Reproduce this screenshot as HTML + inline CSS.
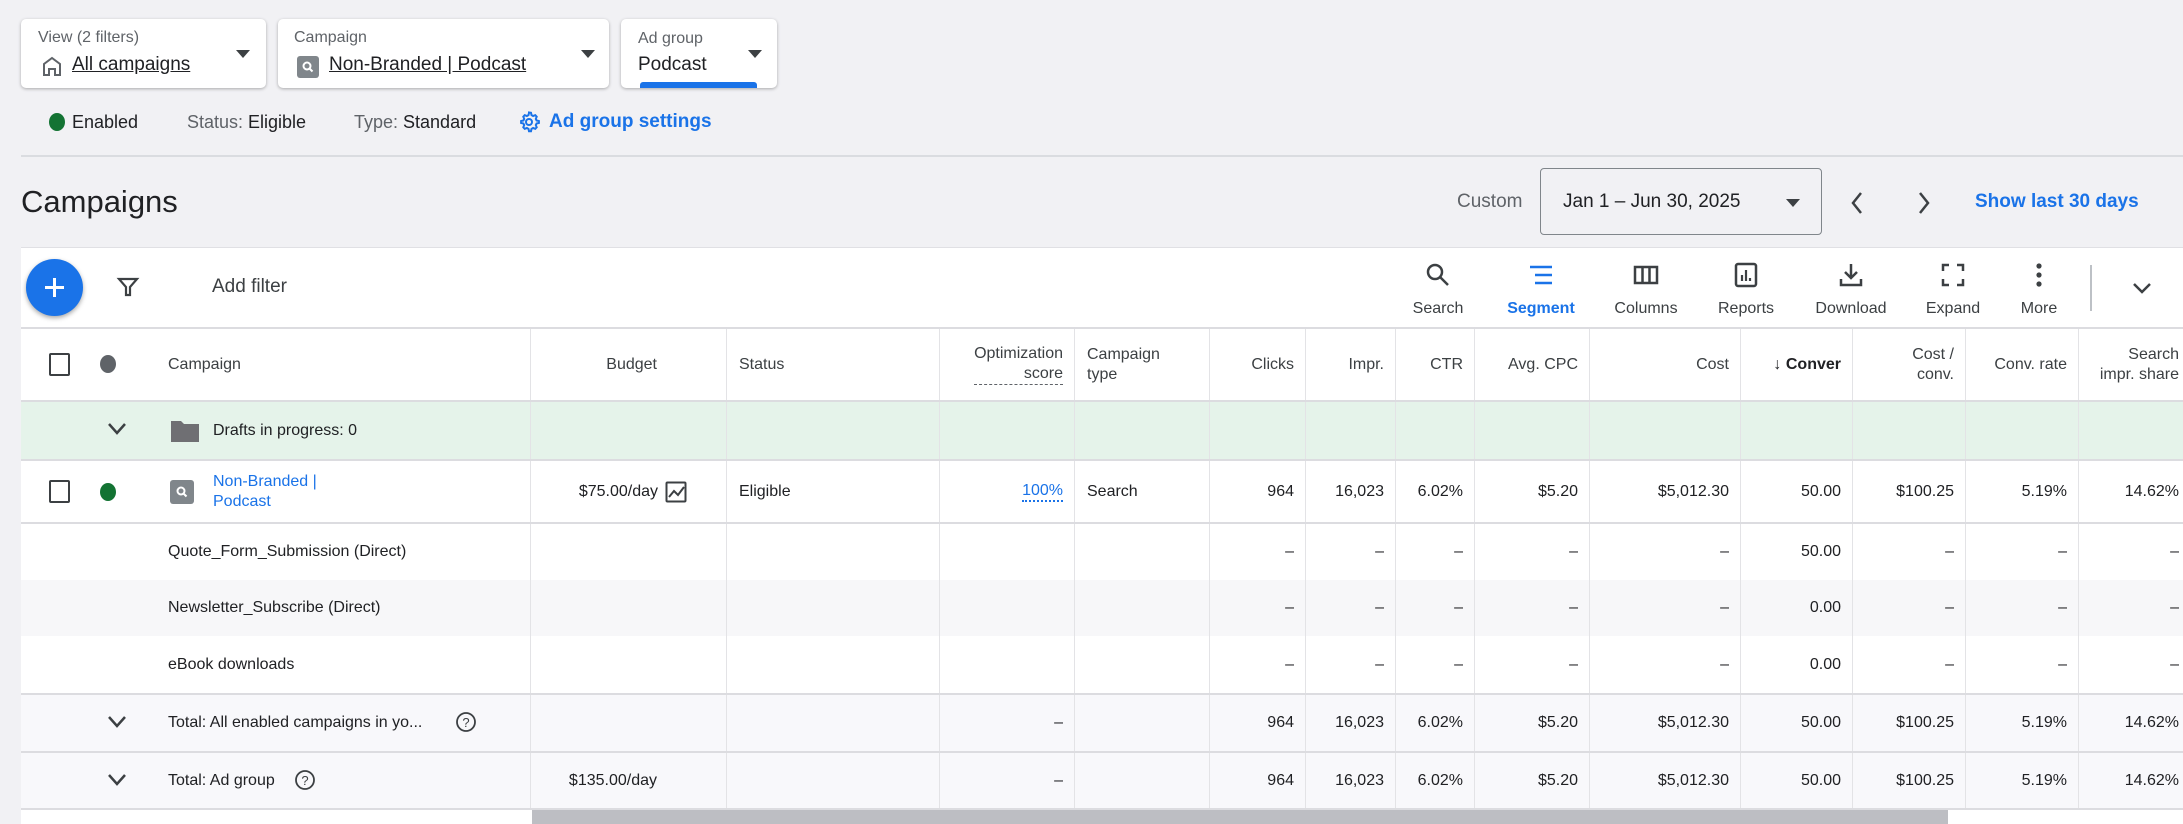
<!DOCTYPE html>
<html><head><meta charset="utf-8"><style>
*{box-sizing:border-box;margin:0;padding:0}
body{width:2183px;height:824px;overflow:hidden;background:#f1f1f4;font-family:"Liberation Sans",Arial,sans-serif;color:#202124;position:relative;font-size:16px}
.a{position:absolute}
.box{position:absolute;top:19px;height:69px;background:#fff;border-radius:5px;box-shadow:0 1px 3px rgba(0,0,0,.3)}
.lbl{position:absolute;top:29px;font-size:16px;color:#5f6368}
.val{position:absolute;top:54px;font-size:19px;color:#202124}
.u{text-decoration:underline}
.tri{position:absolute;top:50px;width:0;height:0;border-left:7px solid transparent;border-right:7px solid transparent;border-top:8px solid #3c4043}
.row{position:absolute;left:21px;width:2162px;display:flex}
.row>div{border-right:1px solid #e3e3e6;display:flex;align-items:center;justify-content:flex-end;padding-right:11px;font-size:16px;flex:none}
.w0{width:510px}.w1{width:196px}.w2{width:213px}.w3{width:135px}.w4{width:135px}.w5{width:96px}.w6{width:90px}.w7{width:79px}.w8{width:115px}.w9{width:151px}.w10{width:112px}.w11{width:113px}.w12{width:113px}.w13{width:104px;border-right:none!important}
.l{justify-content:flex-start!important;padding-left:12px}
.hdr>div{color:#3c4043;font-size:16px}
.tb{position:absolute;top:300px;font-size:16px;color:#3c4043;transform:translateX(-50%)}
.ic{position:absolute;top:262px;transform:translateX(-50%)}
.hline{position:absolute;left:21px;width:2162px;height:2px;background:#dcdce0}
</style></head><body>

<div class="box" style="left:21px;width:245px"></div>
<div class="lbl" style="left:38px">View (2 filters)</div>
<svg class="a" style="left:40px;top:54px" width="24" height="24" viewBox="0 0 24 24"><path d="M4 21V10l8-6 8 6v11h-5v-6H9v6z" fill="none" stroke="#5f6368" stroke-width="2"/></svg>
<div class="val u" style="left:72px">All campaigns</div>
<div class="tri" style="left:236px"></div>

<div class="box" style="left:278px;width:331px"></div>
<div class="lbl" style="left:294px">Campaign</div>
<div class="a" style="left:297px;top:56px;width:22px;height:22px;background:#80868b;border-radius:3px"></div>
<svg class="a" style="left:300px;top:59px" width="16" height="16" viewBox="0 0 16 16"><circle cx="7" cy="7" r="3.5" fill="none" stroke="#fff" stroke-width="2"/><path d="M9.5 9.5l3 3" stroke="#fff" stroke-width="2"/></svg>
<div class="val u" style="left:329px">Non-Branded | Podcast</div>
<div class="tri" style="left:581px"></div>

<div class="box" style="left:621px;width:156px"></div>
<div class="lbl" style="left:638px;top:30px">Ad group</div>
<div class="val" style="left:638px">Podcast</div>
<div class="tri" style="left:748px"></div>
<div class="a" style="left:640px;top:82px;width:117px;height:6px;background:#1a73e8;border-radius:3px 3px 0 0"></div>

<div class="a" style="left:49px;top:113px;width:16px;height:18px;border-radius:50%;background:#137333"></div>
<div class="a" style="left:72px;top:112px;font-size:18px">Enabled</div>
<div class="a" style="left:187px;top:112px;font-size:18px"><span style="color:#5f6368">Status:</span> Eligible</div>
<div class="a" style="left:354px;top:112px;font-size:18px"><span style="color:#5f6368">Type:</span> Standard</div>
<svg class="a" style="left:517px;top:110px" width="24" height="24" viewBox="0 0 24 24"><path d="M12 2.5l2 .3.5 2.3 1.6.9 2.2-.8 1.4 1.5-.9 2.2.8 1.6 2.3.5v2l-2.3.5-.8 1.6.9 2.2-1.4 1.5-2.2-.8-1.6.9-.5 2.3h-2l-.5-2.3-1.6-.9-2.2.8-1.4-1.5.9-2.2-.8-1.6-2.3-.5v-2l2.3-.5.8-1.6-.9-2.2 1.4-1.5 2.2.8 1.6-.9.5-2.3z" fill="none" stroke="#1a73e8" stroke-width="2"/><circle cx="12" cy="12" r="3" fill="none" stroke="#1a73e8" stroke-width="2"/></svg>
<div class="a" style="left:549px;top:111px;font-size:19px;color:#1a73e8;font-weight:bold">Ad group settings</div>

<div class="a" style="left:21px;top:155px;width:2162px;height:2px;background:#dadce0"></div>
<div class="a" style="left:21px;top:184px;font-size:31px">Campaigns</div>
<div class="a" style="left:1457px;top:191px;font-size:19px;color:#5f6368">Custom</div>
<div class="a" style="left:1540px;top:168px;width:282px;height:67px;border:1.5px solid #80868b;border-radius:4px;background:#f1f1f4"></div>
<div class="a" style="left:1563px;top:191px;font-size:19px">Jan 1 – Jun 30, 2025</div>
<div class="a" style="left:1786px;top:199px;border-left:7px solid transparent;border-right:7px solid transparent;border-top:8px solid #3c4043"></div>
<svg class="a" style="left:1848px;top:190px" width="18" height="26" viewBox="0 0 18 26"><path d="M13 3L5 13l8 10" fill="none" stroke="#3c4043" stroke-width="2.5"/></svg>
<svg class="a" style="left:1915px;top:190px" width="18" height="26" viewBox="0 0 18 26"><path d="M5 3l8 10-8 10" fill="none" stroke="#3c4043" stroke-width="2.5"/></svg>
<div class="a" style="left:1975px;top:191px;font-size:19px;color:#1a73e8;font-weight:bold">Show last 30 days</div>

<div class="a" style="left:21px;top:247px;width:2162px;height:577px;background:#fff"></div>
<div class="a" style="left:21px;top:247px;width:2162px;height:1px;background:#e0e0e4"></div>
<div class="a" style="left:26px;top:259px;width:57px;height:57px;border-radius:50%;background:#1a73e8;box-shadow:0 2px 5px rgba(0,0,0,.35)"></div>
<svg class="a" style="left:40px;top:273px" width="29" height="29" viewBox="0 0 29 29"><path d="M14.5 5v19M5 14.5h19" stroke="#fff" stroke-width="3"/></svg>
<svg class="a" style="left:116px;top:275px" width="24" height="24" viewBox="0 0 24 24"><path d="M3 4h18l-7 8v8h-4v-8z" fill="none" stroke="#3c4043" stroke-width="2.2"/></svg>
<div class="a" style="left:212px;top:276px;font-size:19px;color:#3c4043">Add filter</div>

<svg class="ic" style="left:1438px" width="26" height="26" viewBox="0 0 26 26"><circle cx="10" cy="10" r="7" fill="none" stroke="#3c4043" stroke-width="2.5"/><path d="M15 15l8 8" stroke="#3c4043" stroke-width="2.5"/></svg>
<svg class="ic" style="left:1541px" width="26" height="26" viewBox="0 0 26 26"><path d="M2 5h22M7 13h17M7 21h17" stroke="#1a73e8" stroke-width="2.5"/></svg>
<svg class="ic" style="left:1646px" width="26" height="26" viewBox="0 0 26 26"><rect x="2" y="5" width="22" height="16" fill="none" stroke="#3c4043" stroke-width="2.5"/><path d="M9.5 5v16M16.5 5v16" stroke="#3c4043" stroke-width="2.5"/></svg>
<svg class="ic" style="left:1746px" width="26" height="26" viewBox="0 0 26 26"><rect x="3" y="2" width="20" height="22" rx="2" fill="none" stroke="#3c4043" stroke-width="2.5"/><path d="M9 19v-6M13 19V8M17 19v-3" stroke="#3c4043" stroke-width="2.2"/></svg>
<svg class="ic" style="left:1851px" width="26" height="26" viewBox="0 0 26 26"><path d="M13 2v14M7 10l6 6 6-6M3 17v6h20v-6" fill="none" stroke="#3c4043" stroke-width="2.5"/></svg>
<svg class="ic" style="left:1953px" width="26" height="26" viewBox="0 0 26 26"><path d="M3 9V3h6M17 3h6v6M23 17v6h-6M9 23H3v-6" fill="none" stroke="#3c4043" stroke-width="2.5"/></svg>
<svg class="ic" style="left:2039px" width="26" height="26" viewBox="0 0 26 26"><circle cx="13" cy="4" r="2.6" fill="#3c4043"/><circle cx="13" cy="13" r="2.6" fill="#3c4043"/><circle cx="13" cy="22" r="2.6" fill="#3c4043"/></svg>
<div class="tb" style="left:1438px">Search</div>
<div class="tb" style="left:1541px;color:#1a73e8;font-weight:bold">Segment</div>
<div class="tb" style="left:1646px">Columns</div>
<div class="tb" style="left:1746px">Reports</div>
<div class="tb" style="left:1851px">Download</div>
<div class="tb" style="left:1953px">Expand</div>
<div class="tb" style="left:2039px">More</div>
<div class="a" style="left:2090px;top:265px;width:2px;height:46px;background:#bdc1c6"></div>
<svg class="a" style="left:2131px;top:280px" width="22" height="16" viewBox="0 0 22 16"><path d="M3 4l8 8 8-8" fill="none" stroke="#3c4043" stroke-width="2.5"/></svg>
<div class="hline" style="top:327px"></div>

<!-- header -->
<div class="row hdr" style="top:329px;height:71px">
<div class="w0 l" style="padding-left:147px">Campaign</div>
<div class="w1" style="padding-right:69px">Budget</div>
<div class="w2 l">Status</div>
<div class="w3" style="text-align:right;line-height:20px"><span style="border-bottom:1.5px dashed #5f6368">Optimization<br>score</span></div>
<div class="w4 l" style="line-height:20px">Campaign<br>type</div>
<div class="w5">Clicks</div><div class="w6">Impr.</div><div class="w7">CTR</div><div class="w8">Avg. CPC</div><div class="w9">Cost</div>
<div class="w10" style="color:#202124;font-weight:bold">↓ Conver</div>
<div class="w11" style="text-align:right;line-height:20px">Cost /<br>conv.</div>
<div class="w12">Conv. rate</div>
<div class="w13" style="text-align:right;line-height:20px;padding-right:4px">Search<br>impr. share</div>
</div>
<div class="a" style="left:49px;top:353px;width:21px;height:23px;border:2.5px solid #3c4043;border-radius:2px"></div>
<div class="a" style="left:100px;top:355px;width:16px;height:18px;border-radius:50%;background:#5f6368"></div>
<div class="hline" style="top:400px"></div>

<!-- drafts -->
<div class="row" style="top:402px;height:57px;background:#e5f3ea">
<div class="w0 l" style="padding-left:192px">Drafts in progress: 0</div><div class="w1"></div><div class="w2"></div><div class="w3"></div><div class="w4"></div><div class="w5"></div><div class="w6"></div><div class="w7"></div><div class="w8"></div><div class="w9"></div><div class="w10"></div><div class="w11"></div><div class="w12"></div><div class="w13"></div>
</div>
<svg class="a" style="left:106px;top:421px" width="22" height="16" viewBox="0 0 22 16"><path d="M3 3l8 9 8-9" fill="none" stroke="#3c4043" stroke-width="2.5"/></svg>
<svg class="a" style="left:170px;top:418px" width="30" height="25" viewBox="0 0 30 25"><path d="M1 3h10l3 3h15v18H1z" fill="#6f6f73"/></svg>
<div class="hline" style="top:459px"></div>

<!-- campaign row -->
<div class="row" style="top:461px;height:61px">
<div class="w0 l" style="padding-left:192px;color:#1a73e8;line-height:20px">Non-Branded |<br>Podcast</div>
<div class="w1" style="padding-right:68px">$75.00/day</div>
<div class="w2 l">Eligible</div>
<div class="w3"><span style="color:#1a73e8;border-bottom:2px dotted #1a73e8">100%</span></div>
<div class="w4 l">Search</div>
<div class="w5">964</div><div class="w6">16,023</div><div class="w7">6.02%</div><div class="w8">$5.20</div><div class="w9">$5,012.30</div><div class="w10">50.00</div><div class="w11">$100.25</div><div class="w12">5.19%</div><div class="w13" style="padding-right:4px">14.62%</div>
</div>
<div class="a" style="left:49px;top:480px;width:21px;height:23px;border:2.5px solid #3c4043;border-radius:2px"></div>
<div class="a" style="left:100px;top:483px;width:16px;height:18px;border-radius:50%;background:#137333"></div>
<div class="a" style="left:170px;top:480px;width:24px;height:24px;background:#80868b;border-radius:3px"></div>
<svg class="a" style="left:174px;top:484px" width="16" height="16" viewBox="0 0 16 16"><circle cx="7" cy="7" r="3.5" fill="none" stroke="#fff" stroke-width="2"/><path d="M9.5 9.5l3 3" stroke="#fff" stroke-width="2"/></svg>
<svg class="a" style="left:665px;top:481px" width="22" height="22" viewBox="0 0 22 22"><rect x="1.5" y="1.5" width="19" height="19" rx="1" fill="none" stroke="#3c4043" stroke-width="2"/><path d="M4 16l5-6 4 4 6-8" fill="none" stroke="#3c4043" stroke-width="2"/></svg>
<div class="hline" style="top:522px"></div>

<div class="row" style="top:524px;height:56px">
<div class="w0 l" style="padding-left:147px">Quote_Form_Submission (Direct)</div><div class="w1"></div><div class="w2"></div><div class="w3"></div><div class="w4"></div>
<div class="w5">–</div><div class="w6">–</div><div class="w7">–</div><div class="w8">–</div><div class="w9">–</div><div class="w10">50.00</div><div class="w11">–</div><div class="w12">–</div><div class="w13" style="padding-right:4px">–</div></div>
<div class="row" style="top:580px;height:56px;background:#f7f7f9">
<div class="w0 l" style="padding-left:147px">Newsletter_Subscribe (Direct)</div><div class="w1"></div><div class="w2"></div><div class="w3"></div><div class="w4"></div>
<div class="w5">–</div><div class="w6">–</div><div class="w7">–</div><div class="w8">–</div><div class="w9">–</div><div class="w10">0.00</div><div class="w11">–</div><div class="w12">–</div><div class="w13" style="padding-right:4px">–</div></div>
<div class="row" style="top:636px;height:57px">
<div class="w0 l" style="padding-left:147px">eBook downloads</div><div class="w1"></div><div class="w2"></div><div class="w3"></div><div class="w4"></div>
<div class="w5">–</div><div class="w6">–</div><div class="w7">–</div><div class="w8">–</div><div class="w9">–</div><div class="w10">0.00</div><div class="w11">–</div><div class="w12">–</div><div class="w13" style="padding-right:4px">–</div></div>
<div class="hline" style="top:693px"></div>

<div class="row" style="top:695px;height:56px;background:#f8f8fb">
<div class="w0 l" style="padding-left:147px">Total: All enabled campaigns in yo...</div><div class="w1"></div><div class="w2"></div><div class="w3">–</div><div class="w4"></div>
<div class="w5">964</div><div class="w6">16,023</div><div class="w7">6.02%</div><div class="w8">$5.20</div><div class="w9">$5,012.30</div><div class="w10">50.00</div><div class="w11">$100.25</div><div class="w12">5.19%</div><div class="w13" style="padding-right:4px">14.62%</div></div>
<div class="hline" style="top:751px"></div>
<div class="row" style="top:753px;height:56px;background:#f8f8fb">
<div class="w0 l" style="padding-left:147px">Total: Ad group</div><div class="w1" style="padding-right:69px">$135.00/day</div><div class="w2"></div><div class="w3">–</div><div class="w4"></div>
<div class="w5">964</div><div class="w6">16,023</div><div class="w7">6.02%</div><div class="w8">$5.20</div><div class="w9">$5,012.30</div><div class="w10">50.00</div><div class="w11">$100.25</div><div class="w12">5.19%</div><div class="w13" style="padding-right:4px">14.62%</div></div>
<svg class="a" style="left:106px;top:714px" width="22" height="16" viewBox="0 0 22 16"><path d="M3 3l8 9 8-9" fill="none" stroke="#3c4043" stroke-width="2.5"/></svg>
<svg class="a" style="left:106px;top:772px" width="22" height="16" viewBox="0 0 22 16"><path d="M3 3l8 9 8-9" fill="none" stroke="#3c4043" stroke-width="2.5"/></svg>
<svg class="a" style="left:455px;top:711px" width="22" height="22" viewBox="0 0 22 22"><circle cx="11" cy="11" r="9" fill="none" stroke="#3c4043" stroke-width="1.8"/><text x="11" y="16" font-size="13" text-anchor="middle" fill="#3c4043" font-family="Liberation Sans">?</text></svg>
<svg class="a" style="left:294px;top:769px" width="22" height="22" viewBox="0 0 22 22"><circle cx="11" cy="11" r="9" fill="none" stroke="#3c4043" stroke-width="1.8"/><text x="11" y="16" font-size="13" text-anchor="middle" fill="#3c4043" font-family="Liberation Sans">?</text></svg>
<div class="hline" style="top:808px"></div>
<div class="a" style="left:532px;top:810px;width:1416px;height:14px;background:#bdbec3"></div>
</body></html>
